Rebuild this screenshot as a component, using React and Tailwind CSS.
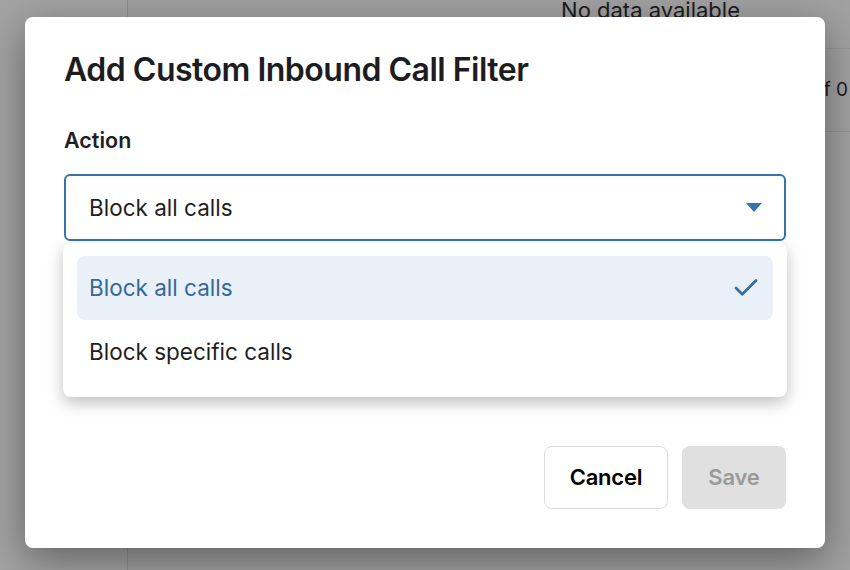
import { Check } from 'lucide-react';

const OPTIONS = ['Block all calls', 'Block specific calls'];

function Caret() {
  return (
    <svg width="16" height="9" viewBox="0 0 16 9" className="text-[#3574ab]">
      <path d="M0 0h16L8 9z" fill="currentColor" />
    </svg>
  );
}

export default function App() {
  const selected = OPTIONS[0];

  return (
    <div
      className="relative h-[570px] w-[850px] overflow-hidden bg-[#a1a1a1]"
      style={{ fontFamily: 'Inter, "Noto Sans", sans-serif' }}
    >
      {/* page behind the overlay */}
      <div className="flex h-full">
        <div className="w-[128px] shrink-0 border-r border-[#8f8f8f] bg-[#a3a3a3]" />
        <div className="flex flex-1 flex-col">
          <div className="flex h-[49px] justify-end border-b border-[#939393] pr-[110px]">
            <span className="-mt-[4px] text-[22px] leading-[28px] text-[#1c1c1c]">No data available</span>
          </div>
          <div className="flex h-[83px] items-center justify-end border-b border-[#939393] pr-[2px]">
            <span className="text-[19px] text-[#1c1c1c]">1 of 0</span>
          </div>
        </div>
      </div>

      {/* modal */}
      <div className="absolute left-[25px] top-[17px] flex h-[531px] w-[800px] flex-col rounded-lg bg-white px-[39px] shadow-[0_12px_40px_rgba(0,0,0,0.4)]">
        <h1 className="mt-[34px] text-[32px] font-semibold leading-[38px] tracking-[-0.5px] text-[#1d1d21]">
          Add Custom Inbound Call Filter
        </h1>

        <label className="mt-[38px] text-[21.5px] font-semibold leading-[26px] text-[#1f1f1f]">Action</label>

        <div className="relative mt-[21px]">
          <div className="flex h-[67px] items-center justify-between rounded-md border-2 border-[#3574ab] pl-[23px] pr-[22px]">
            <span className="text-[22.5px] text-[#1f1f1f]">{selected}</span>
            <Caret />
          </div>

          <div className="absolute left-[-1px] right-[-1px] top-[69px] z-10 rounded-lg bg-white px-[14px] pb-[13px] pt-[13px] shadow-[0_6px_16px_rgba(0,0,0,0.25)]">
            {OPTIONS.map((opt) => (
              <div
                key={opt}
                className={
                  opt === selected
                    ? 'flex h-[64px] items-center justify-between rounded-lg bg-[#eaf0f8] pl-[12px] pr-[12px] text-[22.5px] text-[#35689b]'
                    : 'flex h-[64px] items-center justify-between pl-[12px] pr-[12px] text-[22.5px] text-[#1f1f1f]'
                }
              >
                {opt}
                {opt === selected && <Check size={30} strokeWidth={2.2} className="text-[#3a6d9f]" />}
              </div>
            ))}
          </div>
        </div>

        <div className="mt-auto mb-[39px] flex justify-end gap-[14px]">
          <button className="h-[63px] w-[124px] rounded-lg border border-[#dcdcdc] bg-white text-[22px] font-semibold tracking-[-0.2px] text-black">
            Cancel
          </button>
          <button className="h-[63px] w-[104px] rounded-lg bg-[#e0e0e0] text-[22px] font-semibold tracking-[-0.2px] text-[#9a9a9a]">
            Save
          </button>
        </div>
      </div>
    </div>
  );
}
